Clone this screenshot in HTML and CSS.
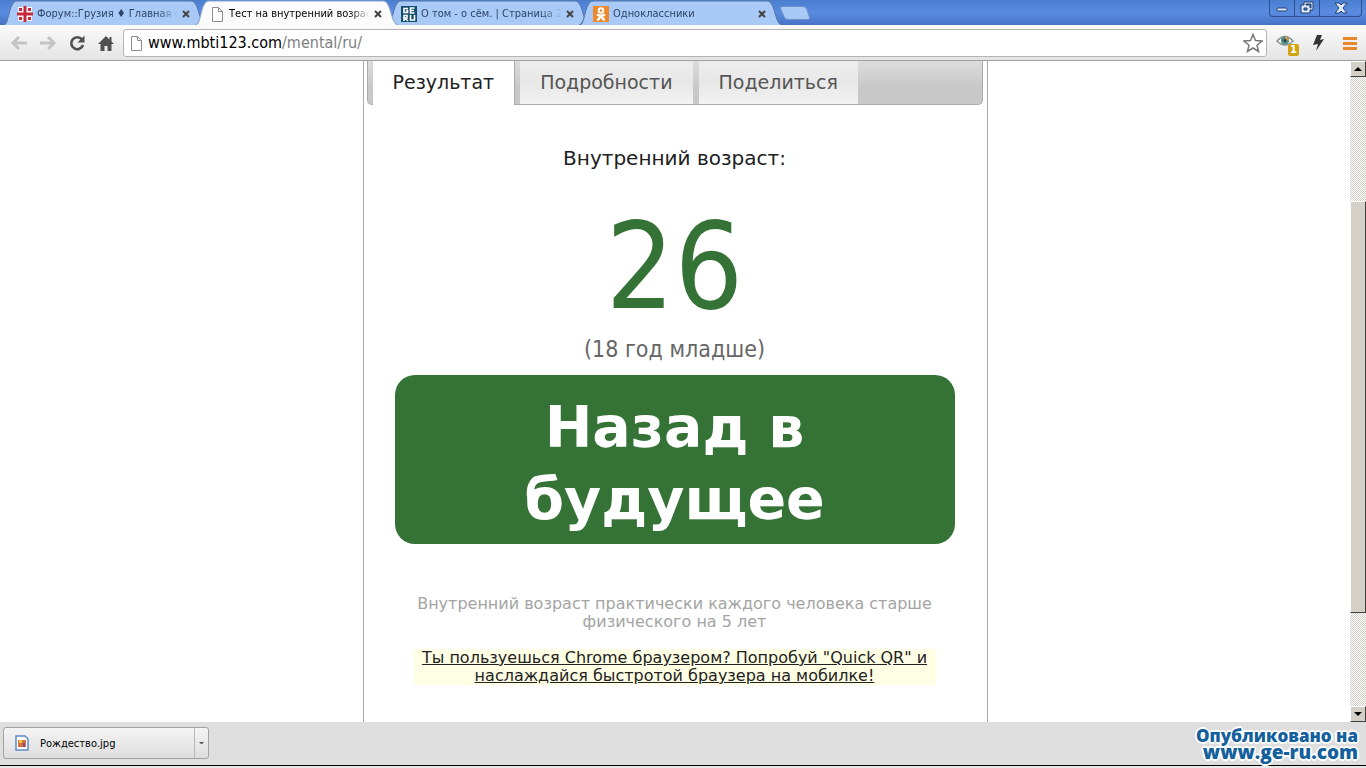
FILE: index.html
```html
<!DOCTYPE html>
<html lang="ru">
  <head>
    <meta charset="UTF-8" />
    <meta name="viewport" content="width=device-width, initial-scale=1" />
    <title>Тест на внутренний возраст</title>
    <link rel="stylesheet" href="styles.css">
  </head>
  <body>
    <!-- Tab strip -->
    <header class="tab-strip">
      <div class="tab">
        <svg class="tab-shape" viewBox="0 0 204 24" preserveAspectRatio="none"><path d="M0 24 C7 24 5 1 14 1 H188 C197 1 195 24 204 24" /></svg>
        <svg class="favicon" viewBox="0 0 16 16">
          <path fill="#fff" d="M1 1h14v14H1z" />
          <path fill="#c8283c" d="M6.500 0h3v6.500H16v3H9.500V16h-3V9.500H0v-3h6.500zM2 2h3v3H2zM11 2h3v3h-3zM2 11h3v3H2zM11 11h3v3h-3z" />
        </svg>
        <span class="tab-title">Форум::Грузия ♦ Главная страница</span>
        <button class="tab-close" aria-label="Закрыть"><svg viewBox="0 0 8 8"><path d="M1 1l6 6M7 1l-6 6" /></svg></button>
      </div>
      <div class="tab active">
        <svg class="tab-shape" viewBox="0 0 204 24" preserveAspectRatio="none"><path d="M0 24 C7 24 5 1 14 1 H188 C197 1 195 24 204 24" /></svg>
        <svg class="favicon" viewBox="0 0 16 16"><path class="sheet" d="M3.500 1.500h6l4 4v10h-10zM9.500 1.500v4h4" /></svg>
        <span class="tab-title">Тест на внутренний возраст</span>
        <button class="tab-close" aria-label="Закрыть"><svg viewBox="0 0 8 8"><path d="M1 1l6 6M7 1l-6 6" /></svg></button>
      </div>
      <div class="tab">
        <svg class="tab-shape" viewBox="0 0 204 24" preserveAspectRatio="none"><path d="M0 24 C7 24 5 1 14 1 H188 C197 1 195 24 204 24" /></svg>
        <svg class="favicon" viewBox="0 0 16 16">
          <path fill="#14506e" d="M0 0h16v16H0z" />
          <path fill="none" stroke="#fff" stroke-width="1.600" d="M7 2.500H3v4h3.500V4.500H5M13.500 2H9.500v5h4M9.500 4.500h3.500M3 15V9.500h3v2.500H3.500l3.500 3M9.500 9v5h4V9" />
        </svg>
        <span class="tab-title">О том - о сём. | Страница 2 из 5</span>
        <button class="tab-close" aria-label="Закрыть"><svg viewBox="0 0 8 8"><path d="M1 1l6 6M7 1l-6 6" /></svg></button>
      </div>
      <div class="tab">
        <svg class="tab-shape" viewBox="0 0 204 24" preserveAspectRatio="none"><path d="M0 24 C7 24 5 1 14 1 H188 C197 1 195 24 204 24" /></svg>
        <svg class="favicon" viewBox="0 0 16 16">
          <path fill="#ee8a2c" d="M0 0h16v16H0z" />
          <circle cx="8" cy="4.500" r="2.300" fill="none" stroke="#fff" stroke-width="2" />
          <path fill="none" stroke="#fff" stroke-width="2.400" d="M4 8.500q4 2.500 8 0M8 10l-3.500 4.500M8 10l3.500 4.500" />
        </svg>
        <span class="tab-title">Одноклассники</span>
        <button class="tab-close" aria-label="Закрыть"><svg viewBox="0 0 8 8"><path d="M1 1l6 6M7 1l-6 6" /></svg></button>
      </div>
      <button class="new-tab" aria-label="Новая вкладка">
        <svg viewBox="0 0 32 16"><path d="M3 1.500H24q3 0 4 3l2.500 8q.5 2-2 2H9q-3 0-4-3L1.500 3.500q-.5-2 1.500-2z" /></svg>
      </button>
      <div class="window-buttons">
        <button aria-label="Свернуть"><svg viewBox="0 0 16 16"><rect x="3" y="8" width="10" height="3" rx="1" /></svg></button>
        <button aria-label="Восстановить"><svg viewBox="0 0 16 16"><path fill-rule="evenodd" d="M5 2h9v8h-3v3H2V5h3zM7 4v1h4v3h1V4zM5 8v2h3V8z" /></svg></button>
        <button class="wide" aria-label="Закрыть окно"><svg viewBox="0 0 16 16"><path d="M2 3h4l2 2 2-2h4l-4 5 4 5h-4l-2-2-2 2H2l4-5z" /></svg></button>
      </div>
    </header>

    <!-- Toolbar -->
    <nav class="toolbar">
      <button class="tool" aria-label="Назад"><svg class="arrow" viewBox="0 0 18 18"><path d="M17 9H3M9 3L3 9l6 6" /></svg></button>
      <button class="tool" aria-label="Вперёд"><svg class="arrow" viewBox="0 0 18 18"><path d="M1 9h14M9 3l6 6-6 6" /></svg></button>
      <button class="tool" aria-label="Обновить">
        <svg viewBox="0 0 18 18"><path fill="none" stroke="#505050" stroke-width="2.600" d="M14 5.500A6 6 0 1 0 15 11" /><path fill="#505050" d="M16.500 1.500v7h-7z" /></svg>
      </button>
      <button class="tool" aria-label="Домой">
        <svg viewBox="0 0 18 18"><path fill="#505050" d="M9 2L1 10h2.500v7h4v-5h3v5h4v-7H17l-2.500-2.500V3h-2v2.500z" /></svg>
      </button>
      <div class="omnibox">
        <svg class="favicon" viewBox="0 0 16 16"><path class="sheet" d="M3.500 1.500h6l4 4v10h-10zM9.500 1.500v4h4" /></svg>
        <div class="url" role="textbox" aria-label="Адрес">www.mbti123.com<span>/mental/ru/</span></div>
        <button class="star" aria-label="Добавить в закладки">
          <svg viewBox="0 0 20 20"><path d="M10 1.500l2.500 6 6.500.5-5 4.200 1.600 6.300L10 15l-5.600 3.500L6 12.200 1 8l6.500-.5z" /></svg>
        </button>
      </div>
      <button class="tool extension eye" aria-label="Просмотры">
        <svg viewBox="0 0 24 20">
          <path fill="#f4f4f4" stroke="#8a8f94" stroke-width="1.500" d="M3 8Q11-1 19 8 11 16 3 8z" />
          <circle cx="11" cy="7.500" r="4" fill="#4e8f80" /><path fill="#d29a4e" d="M11 3.500a4 4 0 0 1 4 4h-4z" /><circle cx="11" cy="7.500" r="1.700" fill="#345" />
        </svg>
        <span class="badge">1</span>
      </button>
      <button class="tool extension" aria-label="Молния"><svg viewBox="0 0 18 18"><path fill="#333" d="M8 1h5l-2 5 4-1-8 12 2-7-5 1z" /></svg></button>
      <button class="tool extension" aria-label="Меню"><svg viewBox="0 0 18 18"><path fill="#e8882a" d="M2 3h14v3H2zM2 8h14v3H2zM2 13h14v3H2z" /></svg></button>
    </nav>

    <!-- Page -->
    <div class="viewport">
      <main class="page">
        <div class="column">
          <ul class="result-tabs">
            <li><a class="current" href="#result">Результат</a></li>
            <li><a href="#details">Подробности</a></li>
            <li><a href="#share">Поделиться</a></li>
          </ul>
          <section id="result" class="result">
            <h1>Внутренний возраст:</h1>
            <p class="age">26</p>
            <p class="difference">(18 год младше)</p>
            <p class="verdict">Назад в будущее</p>
            <p class="note">Внутренний возраст практически каждого человека старше физического на 5 лет</p>
            <p class="promo"><a href="#qr">Ты пользуешься Chrome браузером? Попробуй "Quick QR" и наслаждайся быстротой браузера на мобилке!</a></p>
          </section>
        </div>
      </main>
      <div class="scrollbar">
        <button aria-label="Вверх"><svg viewBox="0 0 8 4"><path d="M0 4l4-4 4 4z" /></svg></button>
        <div class="track"><div class="thumb"></div></div>
        <button aria-label="Вниз"><svg viewBox="0 0 8 4"><path d="M0 0h8L4 4z" /></svg></button>
      </div>
    </div>

    <!-- Downloads -->
    <footer class="downloads">
      <div class="download">
        <button class="file">
          <svg viewBox="0 0 16 16"><path fill="#fff" stroke="#5b8ac4" stroke-width="1.500" d="M2 1h9l3 3v11H2z" /><path fill="#d8703a" d="M4 5h8v7H4z" /><path fill="#f2c24c" d="M5 5h3v3H5z" /><path fill="#7a4a9a" d="M9 8h2v4H9z" /></svg>
          Рождество.jpg
        </button>
        <button class="more" aria-label="Действия"><svg viewBox="0 0 6 3"><path d="M0 0h6L3 3z" /></svg></button>
      </div>
      <div class="watermark">
        <div>Опубликовано на</div>
        <div class="site">www.ge-ru.com</div>
      </div>
    </footer>
  </body>
</html>
```
FILE: styles.css
```css
* {
  box-sizing: border-box;
}

body {
  margin: 0;
  height: 100vh;
  display: flex;
  flex-direction: column;
  overflow: hidden;
  font-family: "DejaVu Sans", Verdana, sans-serif;
  background: #fff;
}

button {
  margin: 0;
  padding: 0;
  border: 0;
  background: none;
  font: inherit;
  color: inherit;
}

svg {
  display: block;
}

p,
h1,
ul {
  margin: 0;
  padding: 0;
}

/* Tab strip */
.tab-strip {
  flex: none;
  display: flex;
  height: 25px;
  padding-left: 3px;
  background: linear-gradient(#4a7fd0, #5a8be0 50%, #4673c6);
}

.tab {
  position: relative;
  display: flex;
  align-items: center;
  width: 204px;
  height: 25px;
  margin-right: -12px;
  padding: 2px 13px 0 14px;
  font-family: "DejaVu Sans Condensed", "DejaVu Sans", sans-serif;
  font-size: 11px;
  color: #2c4468;
}

.tab.active {
  z-index: 1;
  color: #000;
}

.tab-shape {
  position: absolute;
  inset: 0;
  width: 100%;
  height: 100%;
  fill: #a9c9f6;
  stroke: #5578ac;
}

.active .tab-shape {
  fill: #fbfbfb;
  stroke: #8ba6d0;
}

.favicon {
  position: relative;
  flex: none;
  width: 16px;
  height: 16px;
}

.sheet {
  fill: #fff;
  stroke: #8c8c8c;
}

.tab-title {
  position: relative;
  flex: 1;
  margin-left: 4px;
  overflow: hidden;
  white-space: nowrap;
  mask-image: linear-gradient(to left, transparent, #000 20px);
}

.tab-close {
  position: relative;
  width: 16px;
  padding: 4px;
}

.tab-close path {
  stroke: #444;
  stroke-width: 2;
}

.new-tab {
  margin-left: 8px;
  width: 32px;
}

.new-tab path {
  fill: #a9c9f6;
  stroke: #6c8fc8;
}

.window-buttons {
  display: flex;
  height: 17px;
  margin-left: auto;
  margin-right: 4px;
  border: 1px solid #2d5190;
  border-top: 0;
  border-radius: 0 0 4px 4px;
}

.window-buttons button {
  display: flex;
  justify-content: center;
  width: 25px;
  border-right: 1px solid #2d5190;
}

.window-buttons .wide {
  width: 41px;
  border-right: 0;
}

.window-buttons svg {
  width: 16px;
  height: 16px;
  fill: #dce9fc;
  stroke: #24406e;
}

/* Toolbar */
.toolbar {
  flex: none;
  display: flex;
  align-items: center;
  height: 36px;
  padding-left: 4px;
  border-bottom: 1px solid #a0a0a0;
  background: linear-gradient(#fbfbfb, #e4e4e4);
}

.tool {
  position: relative;
  display: flex;
  justify-content: center;
  width: 29px;
}

.tool.extension {
  width: 32px;
}

.tool svg {
  width: 18px;
  height: 18px;
}

.arrow path {
  fill: none;
  stroke: #c4c4c4;
  stroke-width: 3;
}

.omnibox {
  flex: 1;
  display: flex;
  align-items: center;
  height: 28px;
  margin: 0 3px;
  padding: 0 3px 0 4px;
  border: 1px solid #b4b4b4;
  border-radius: 3px;
  background: #fff;
}

.url {
  flex: 1;
  margin-left: 4px;
  font-family: "DejaVu Sans Condensed", "DejaVu Sans", sans-serif;
  font-size: 16px;
  color: #000;
}

.url span {
  color: #808080;
}

.star {
  width: 20px;
}

.star path {
  fill: none;
  stroke: #777;
  stroke-width: 1.5;
}

.tool.eye svg {
  width: 24px;
  height: 20px;
}

.badge {
  position: absolute;
  right: 3px;
  bottom: -3px;
  width: 11px;
  border-radius: 2px;
  background: #d0a410;
  color: #fff;
  font-size: 10px;
  font-weight: bold;
  line-height: 12px;
}

/* Page */
.viewport {
  flex: 1;
  display: flex;
  min-height: 0;
}

.page {
  flex: 1;
  overflow: hidden;
}

.column {
  max-width: 625px;
  min-height: 100%;
  margin: 0 auto;
  padding: 0 4px 0 3px;
  border: solid #aaa;
  border-width: 0 1px;
}

.result-tabs {
  display: flex;
  gap: 6px;
  height: 44px;
  padding-left: 5px;
  border: 1px solid #aaa;
  border-top: 0;
  border-radius: 0 0 5px 5px;
  background: linear-gradient(#dcdcdc, #c8c8c8 60%);
  list-style: none;
}

.result-tabs a {
  display: block;
  height: 43px;
  padding: 0 20px;
  background: linear-gradient(#ededed, #e8e8e8 50%, #f2f2f2);
  color: #555;
  font-size: 19px;
  line-height: 43px;
  text-decoration: none;
}

.result-tabs .current {
  height: 44px;
  background: #fff;
  box-shadow: 1px 0 #aaa;
  color: #212121;
}

.result {
  padding: 40px 28px 0;
  text-align: center;
}

.result h1 {
  color: #212121;
  font-size: 20px;
  font-weight: normal;
  line-height: 26px;
}

.age,
.difference {
  font-family: "DejaVu Sans Condensed", "DejaVu Sans", sans-serif;
}

.age {
  margin-top: 28px;
  color: #347235;
  font-size: 120px;
  line-height: 136px;
}

.difference {
  color: #666;
  font-size: 23px;
  line-height: 28px;
}

.verdict {
  margin-top: 12px;
  padding: 16px 80px 9px;
  border-radius: 20px;
  background: #347235;
  color: #fff;
  font-size: 57px;
  font-weight: bold;
  line-height: 72px;
}

.note,
.promo {
  margin: 51px 19px 0;
  color: #a4a4a4;
  font-size: 16px;
  line-height: 18px;
}

.promo {
  margin-top: 18px;
  background: #ffffe5;
}

.promo a {
  color: #222;
}

/* Scrollbar */
.scrollbar {
  display: flex;
  flex-direction: column;
  width: 16px;
}

.scrollbar button,
.thumb {
  border: 1px solid;
  border-color: #fff #404040 #404040 #fff;
  background: #d4d0c8;
}

.scrollbar button {
  display: flex;
  align-items: center;
  justify-content: center;
  height: 16px;
}

.scrollbar svg {
  width: 8px;
  height: 4px;
}

.track {
  flex: 1;
  padding-top: 124px;
  background: repeating-conic-gradient(#d4d0c8 0 25%, #fff 0 50%) 0 0 / 2px 2px;
}

.thumb {
  height: 412px;
}

/* Downloads */
.downloads {
  position: relative;
  flex: none;
  height: 46px;
  padding: 5px 3px;
  border-bottom: 2px solid #e8e8e8;
  background: #dedede;
  box-shadow: inset 0 -1px #000;
}

.download {
  display: flex;
  width: 206px;
  height: 32px;
  border: 1px solid #a2a2a2;
  border-radius: 3px;
  background: linear-gradient(#f4f4f4, #dedede);
  font-family: "DejaVu Sans Condensed", "DejaVu Sans", sans-serif;
  font-size: 11px;
}

.file {
  flex: 1;
  display: flex;
  align-items: center;
  gap: 10px;
  padding-left: 10px;
}

.file svg {
  width: 16px;
  height: 16px;
}

.more {
  width: 14px;
  padding: 0 4px;
  border-left: 1px solid #b8b8b8;
}

.more path {
  fill: #555;
}

.watermark {
  position: absolute;
  right: 8px;
  top: 6px;
  color: #14609c;
  font-family: "Open Sans", sans-serif;
  font-size: 17px;
  font-weight: 800;
  line-height: 16px;
  text-align: right;
  text-shadow: 2px 0 #fff, -2px 0 #fff, 0 2px #fff, 0 -2px #fff, 1px 1px #fff, -1px -1px #fff, 1px -1px #fff, -1px 1px #fff;
}

.watermark .site {
  font-size: 19px;
}
```
